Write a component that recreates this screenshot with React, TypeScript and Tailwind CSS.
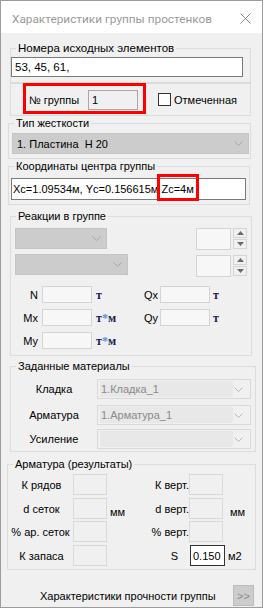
import React from 'react';

const Chevron: React.FC<{ color?: string }> = ({ color = '#a6a6a6' }) => (
  <svg width="9" height="5" viewBox="0 0 9 5">
    <path d="M0.5 0.5 L4.5 4.5 L8.5 0.5" fill="none" stroke={color} strokeWidth="1" />
  </svg>
);

const Spin: React.FC = () => (
  <div className="flex items-start">
    <div className="w-[35px] h-[22px] bg-[#f7f7f7] border border-[#d4d4d4]" />
    <div className="ml-[2px] flex flex-col gap-[1px]">
      <div className="w-[14px] h-[10px] border border-[#d4d4d4] flex items-center justify-center">
        <svg width="7" height="4" viewBox="0 0 7 4"><path d="M3.5 0 L7 4 L0 4 Z" fill="#6b6b6b" /></svg>
      </div>
      <div className="w-[14px] h-[10px] border border-[#d4d4d4] flex items-center justify-center">
        <svg width="7" height="4" viewBox="0 0 7 4"><path d="M0 0 L7 0 L3.5 4 Z" fill="#6b6b6b" /></svg>
      </div>
    </div>
  </div>
);

const Unit: React.FC<{ moment?: boolean }> = ({ moment }) => (
  <span className="font-['Liberation_Serif',serif] font-bold text-[12px] text-[#1b1b55]">
    т{moment && <span className="text-[#5b8fd0]">*</span>}{moment && 'м'}
  </span>
);

const ForceRow: React.FC<{ label: string; moment?: boolean; right?: string; rightMoment?: boolean }> = ({
  label,
  moment,
  right,
  rightMoment,
}) => (
  <div className="flex items-center h-[17px]">
    <span className="w-[27px] text-right">{label}</span>
    <div className="ml-[4px] w-[50px] h-[17px] bg-[#f7f7f7] border border-[#d4d4d4]" />
    <span className="ml-[4px] w-[40px]"><Unit moment={moment} /></span>
    {right && (
      <>
        <span className="w-[22px] text-right">{right}</span>
        <div className="ml-[2px] w-[50px] h-[17px] bg-[#f7f7f7] border border-[#d4d4d4]" />
        <span className="ml-[3px]"><Unit moment={rightMoment} /></span>
      </>
    )}
  </div>
);

const MaterialRow: React.FC<{ label: string; value: string; className?: string }> = ({ label, value, className }) => (
  <div className={`flex items-center h-[20px] ${className ?? ''}`}>
    <span className="w-[86px] text-center">{label}</span>
    <div className="w-[154px] h-[20px] border border-[#d9d9d9] bg-[#f0f0f0] flex items-center pl-[2px] pr-[7px]">
      <div className="w-[133px] h-[16px] bg-[#e8e8e8] text-[#8a8a8a] pl-[1px] leading-[16px]">{value}</div>
      <span className="ml-auto"><Chevron color="#b8b8b8" /></span>
    </div>
  </div>
);

const Cell: React.FC = () => <div className="w-[34px] h-[21px] bg-[#f0f0f0] border border-[#d9d9d9]" />;

export default function App() {
  return (
    <div className="w-[266px] h-[611px] bg-white text-[11px] leading-[14px] text-black font-['Liberation_Sans',Arial,sans-serif]">
      <div className="w-[263px] h-[608px] border border-[#9c9c9c] bg-[#f0f0f0] flex flex-col">
        {/* title bar */}
        <div className="h-[32px] bg-white flex items-center justify-between pl-[11px] pr-[11px]">
          <span className="text-[11.8px] text-[#9a9a9a] font-['Roboto',sans-serif] mt-[4px]">Характеристики группы простенков</span>
          <svg width="11" height="11" viewBox="0 0 11 11" className="mt-[2px]">
            <path d="M0.5 0.5 L10.5 10.5 M10.5 0.5 L0.5 10.5" stroke="#8a8a8a" strokeWidth="1" />
          </svg>
        </div>

        <div className="flex-1 flex flex-col">
          {/* numbers of source elements */}
          <fieldset className="mt-[8px] ml-[9px] w-[241px] border border-[#dcdcdc] pb-[5px]">
            <legend className="ml-[5px] px-[2px] text-[11.5px]">Номера исходных элементов</legend>
            <div className="mt-[2px] w-[232px] h-[20px] bg-white border border-[#7a7a7a] pl-[3px] flex items-center text-[11.5px]">
              53, 45, 61,
            </div>
          </fieldset>

          {/* group number */}
          <div className="relative ml-[9px] w-[241px] h-[33px] border border-[#dcdcdc] flex items-center">
            <span className="ml-[18px] w-[59px]">№ группы</span>
            <div className="w-[50px] h-[20px] bg-[#f0f0f0] border border-[#a8a8a8] pl-[3px] flex items-center">1</div>
            <div className="ml-[20px] w-[13px] h-[13px] bg-white border border-[#333333]" />
            <span className="ml-[3px]">Отмеченная</span>
            <div className="absolute left-[12px] -top-px w-[123px] h-[31px] border-[3px] border-[#ff0000]" />
          </div>

          {/* stiffness type */}
          <fieldset className="ml-[7px] w-[243px] border border-[#dcdcdc] pb-[4px]">
            <legend className="ml-[5px] px-[2px]">Тип жесткости</legend>
            <div className="mt-[3px] ml-[3px] w-[237px] h-[21px] bg-[#cccccc] border border-[#c4c4c4] flex items-center justify-between pl-[4px] pr-[5px]">
              <span className="whitespace-pre">1. Пластина  Н 20</span>
              <Chevron />
            </div>
          </fieldset>

          {/* centre coordinates */}
          <fieldset className="ml-[7px] w-[242px] border border-[#dcdcdc] pb-[4px]">
            <legend className="ml-[5px] px-[2px]">Координаты центра группы</legend>
            <div className="mt-[5px] ml-[2px] w-[235px] h-[22px] bg-white border border-[#7a7a7a] pl-[1px] flex items-center whitespace-pre">
              <span>Xc=1.09534м, Yc=0.156615м </span>
              <span className="relative">
                Zc=4м
                <span className="absolute -left-[4px] -right-[5px] -top-[8px] -bottom-[5px] border-[3px] border-[#ff0000]" />
              </span>
            </div>
          </fieldset>

          {/* reactions */}
          <fieldset className="mt-[4px] ml-[9px] w-[242px] border border-[#dcdcdc] pb-[6px]">
            <legend className="ml-[5px] px-[2px]">Реакции в группе</legend>
            <div className="mt-[5px] flex items-start justify-between pl-[4px] pr-[4px]">
              <div className="w-[92px] h-[21px] bg-[#cccccc] border border-[#c4c4c4] flex items-center justify-end pr-[5px]">
                <Chevron />
              </div>
              <Spin />
            </div>
            <div className="mt-[4px] flex items-start justify-between pl-[4px] pr-[4px]">
              <div className="w-[113px] h-[21px] bg-[#cccccc] border border-[#c4c4c4] flex items-center justify-end pr-[5px]">
                <Chevron />
              </div>
              <div className="mt-[1px]"><Spin /></div>
            </div>
            <div className="mt-[9px] flex flex-col gap-[6px]">
              <ForceRow label="N" right="Qx" />
              <ForceRow label="Mx" moment right="Qy" />
              <ForceRow label="My" moment />
            </div>
          </fieldset>

          {/* materials */}
          <fieldset className="mt-[3px] ml-[9px] w-[246px] border border-[#dcdcdc] pb-[2px]">
            <legend className="ml-[5px] px-[2px]">Заданные материалы</legend>
            <MaterialRow className="mt-[6px]" label="Кладка" value="1.Кладка_1" />
            <MaterialRow className="mt-[6px]" label="Арматура" value="1.Арматура_1" />
            <MaterialRow className="mt-[4px]" label="Усиление" value="" />
          </fieldset>

          {/* reinforcement results */}
          <fieldset className="mt-[5px] ml-[6px] w-[249px] border border-[#dcdcdc] pb-[3px] whitespace-nowrap">
            <legend className="ml-[5px] px-[2px]">Арматура (результаты)</legend>
            <div className="mt-[3px] flex items-center h-[21px]">
              <span className="w-[65px] pl-[2px] text-center">К рядов</span>
              <Cell />
              <span className="w-[44px]" />
              <span className="w-[38px] text-right">К верт.</span>
              <Cell />
            </div>
            <div className="mt-[3px] flex items-center h-[21px]">
              <span className="w-[65px] pl-[2px] text-center">d сеток</span>
              <Cell />
              <span className="w-[44px] pl-[3px] mt-[6px]">мм</span>
              <span className="w-[38px] text-right">d верт.</span>
              <Cell />
              <span className="ml-[7px] mt-[6px]">мм</span>
            </div>
            <div className="mt-[2px] flex items-center h-[21px]">
              <span className="w-[65px] text-center">% ар. сеток</span>
              <Cell />
              <span className="w-[44px]" />
              <span className="w-[38px] text-right">% верт.</span>
              <Cell />
            </div>
            <div className="mt-[3px] flex items-center h-[21px]">
              <span className="w-[65px] pl-[2px] text-center">К запаса</span>
              <Cell />
              <span className="w-[44px]" />
              <span className="w-[38px] text-right pr-[11px]">S</span>
              <div className="ml-[1px] w-[35px] h-[21px] bg-white border border-[#333333] pl-[2px] flex items-center">0.150</div>
              <span className="ml-[3px]">м2</span>
            </div>
          </fieldset>

          {/* footer */}
          <div className="mt-[15px] flex items-center h-[21px]">
            <span className="ml-[39px]">Характеристики прочности группы</span>
            <div className="ml-auto mr-[8px] w-[21px] h-[21px] bg-[#cccccc] border border-[#bcbcbc] flex items-center justify-center text-[#8a8a8a] text-[11px]">
              &gt;&gt;
            </div>
          </div>
        </div>
      </div>
    </div>
  );
}
